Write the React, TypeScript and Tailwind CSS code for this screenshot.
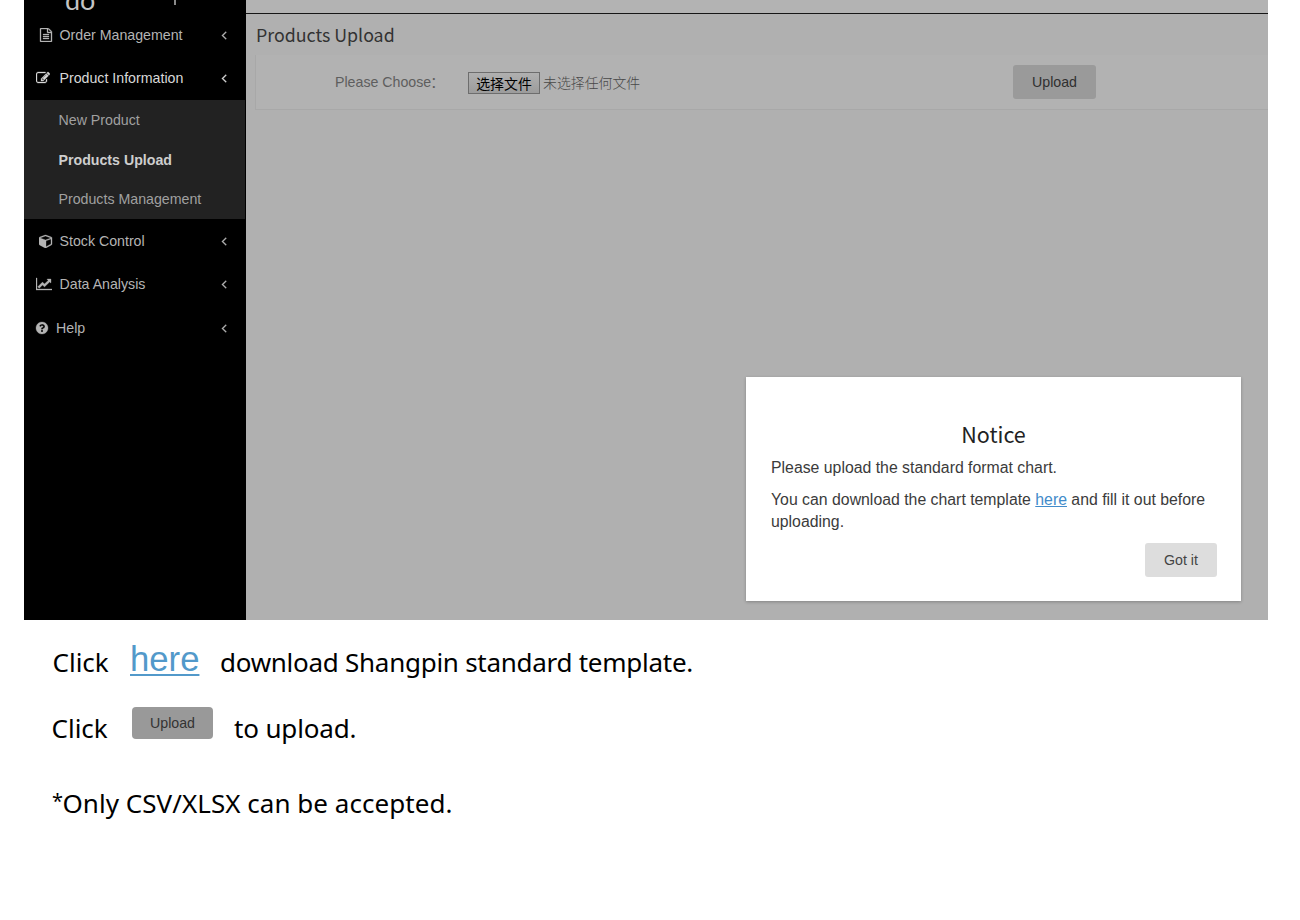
import type { ReactNode } from "react";

const icons = {
  file: "M1596 380q28 28 48 76t20 88v1152q0 40-28 68t-68 28h-1344q-40 0-68-28t-28-68v-1600q0-40 28-68t68-28h896q40 0 88 20t76 48zm-444-244v376h376q-10-29-22-41l-313-313q-12-12-41-22zm384 1528v-1024h-416q-40 0-68-28t-28-68v-416h-768v1536h1280zm-1024-864q0-14 9-23t23-9h704q14 0 23 9t9 23v64q0 14-9 23t-23 9h-704q-14 0-23-9t-9-23v-64zm736 224q14 0 23 9t9 23v64q0 14-9 23t-23 9h-704q-14 0-23-9t-9-23v-64q0-14 9-23t23-9h704zm0 256q14 0 23 9t9 23v64q0 14-9 23t-23 9h-704q-14 0-23-9t-9-23v-64q0-14 9-23t23-9h704z",
  edit: "M888 1184l116-116-152-152-116 116v56h96v96h56zm440-720q-16-16-33 1l-350 350q-17 17-1 33t33-1l350-350q17-17 1-33zm80 594v190q0 119-84.5 203.5t-203.5 84.5h-832q-119 0-203.5-84.5t-84.5-203.5v-832q0-119 84.5-203.5t203.5-84.5h832q63 0 117 25 15 7 18 23 3 17-9 29l-49 49q-14 14-32 8-23-6-45-6h-832q-66 0-113 47t-47 113v832q0 66 47 113t113 47h832q66 0 113-47t47-113v-126q0-13 9-22l64-64q15-15 35-7t20 29zm-96-738l288 288-672 672h-288v-288zm444 132l-92 92-288-288 92-92q28-28 68-28t68 28l152 152q28 28 28 68t-28 68z",
  cube: "M896 1629l640-349v-636l-640 233v752zm-64-865l698-254-698-254-698 254zm832-252v768q0 35-18 65t-49 47l-704 384q-28 16-61 16t-61-16l-704-384q-31-17-49-47t-18-65v-768q0-40 23-73t61-47l704-256q22-8 44-8t44 8l704 256q38 14 61 47t23 73z",
  chart: "M2048 1536v128h-2048v-1536h128v1408h1920zm-128-1248v435q0 21-19.5 29.5t-35.5-7.5l-121-121-633 633q-10 10-23 10t-23-10l-233-233-416 416-192-192 585-585q10-10 23-10t23 10l233 233 464-464-121-121q-16-16-7.5-35.5t29.5-19.5h435q14 0 23 9t9 23z",
  help: "M1024 1376v-192q0-14-9-23t-23-9h-192q-14 0-23 9t-9 23v192q0 14 9 23t23 9h192q14 0 23-9t9-23zm256-672q0-88-55.5-163t-138.5-116-170-41q-243 0-371 213-15 24 8 42l132 100q7 6 19 6 16 0 25-12 53-68 86-92 34-24 86-24 48 0 85.5 26t37.5 59q0 38-20 61t-68 45q-63 28-115.5 86.5t-52.5 125.5v36q0 14 9 23t23 9h192q14 0 23-9t9-23q0-19 21.5-49.5t54.5-49.5q32-18 49-28.5t46-35 44.5-48 28-60.5 12.5-81zm384 192q0 209-103 385.5t-279.5 279.5-385.5 103-385.5-103-279.5-279.5-103-385.5 103-385.5 279.5-279.5 385.5-103 385.5 103 279.5 279.5 103 385.5z",
  angle: "M1203 544q0 13-10 23l-393 393 393 393q10 10 10 23t-10 23l-50 50q-10 10-23 10t-23-10l-466-466q-10-10-10-23t10-23l466-466q10-10 23-10t23 10l50 50q10 10 10 23z",
};

function Icon({ name, className, viewBox = "0 0 1792 1792" }: { name: keyof typeof icons; className: string; viewBox?: string }) {
  return (
    <svg viewBox={viewBox} className={`block shrink-0 fill-current stroke-current stroke-[40px] ${className}`}>
      <path d={icons[name]} />
    </svg>
  );
}

function MenuRow({ icon, label, pad, className }: { icon: ReactNode; label: string; pad: string; className: string }) {
  return (
    <div className={`flex w-full items-center pr-[15px] text-[14.2px] leading-5 ${pad} ${className}`}>
      {icon}
      <span className="grow whitespace-nowrap">{label}</span>
      <Icon name="angle" className="size-[14px]" />
    </div>
  );
}

export default function App() {
  return (
    <div className="h-[920px] w-[1300px] overflow-hidden bg-white font-['Liberation_Sans',Arial,sans-serif]">
      <div className="ml-6 flex h-[620px] w-[1244px] bg-[#b0b0b0]">
        <aside className="flex w-[222px] shrink-0 flex-col bg-black text-[#b4b4b4]">
          <div className="flex h-[13px] items-start overflow-hidden pl-[41px] text-[#c4c4c4]">
            <span className="-mt-[18px] w-[109px] shrink-0 font-['Lato',sans-serif] text-[27px] leading-[36px]">do</span>
            <span className="h-[5px] w-[2px] bg-[#8a8a8a]" />
          </div>
          <MenuRow pad="pl-[15px]" className="h-[44px]" label="Order Management" icon={<Icon name="file" className="mr-[6.5px] size-[14px]" />} />
          <MenuRow pad="pl-[12px]" className="h-[43px] pb-px text-[#d8d8d8]" label="Product Information" icon={<Icon name="edit" className="mr-[9.5px] size-[14px]" />} />
          <div className="h-[119px] w-[221px] bg-[#222222] pl-[34.5px] text-[14.2px] text-[#a0a0a0]">
            <div className="h-10 leading-[40px]">New Product</div>
            <div className="h-10 font-bold leading-[40px] text-[#cecece]">Products Upload</div>
            <div className="h-[39px] leading-[39px]">Products Management</div>
          </div>
          <MenuRow pad="pl-[15px]" className="h-[44px]" label="Stock Control" icon={<Icon name="cube" className="mr-[6.5px] size-[14px]" />} />
          <MenuRow pad="pl-[12px]" className="h-[43px] pb-px" label="Data Analysis" icon={<Icon name="chart" viewBox="0 0 2048 1792" className="mr-[7.5px] h-[14px] w-4" />} />
          <MenuRow pad="pl-[11px]" className="h-[44px]" label="Help" icon={<Icon name="help" className="mr-[7px] size-[14px]" />} />
        </aside>

        <main className="flex min-w-0 grow flex-col">
          <div className="h-[14px] border-b border-[#161616] bg-[#b3b3b3]" />
          <h1 className="h-[41px] pl-[10px] font-['Noto_Sans_CJK_SC',sans-serif] text-[17.8px] leading-[40px] text-[#333333]">Products Upload</h1>
          <div className="ml-[9px] flex h-[55px] items-center border-b border-l border-[#a8a8a8] bg-[#b2b2b2] text-[14.2px]">
            <span className="w-[134px] pt-[2px] pl-[79px] whitespace-nowrap text-[#5e5e5e]">
              Please Choose<span lang="zh-CN" className="-ml-px font-['Noto_Sans_CJK_SC',sans-serif] leading-none">：</span>
            </span>
            <button className="mt-px ml-[78px] h-[22px] w-[72px] border border-[#6d6d6d] bg-linear-to-b from-[#b0b0b0] to-[#9c9c9c] font-['Noto_Sans_CJK_SC',sans-serif] text-[13.9px] leading-5 text-black">选择文件</button>
            <span className="ml-[3px] pt-px font-['Noto_Sans_CJK_SC',sans-serif] text-[13.9px] font-light text-[#484848]">未选择任何文件</span>
            <button className="mr-[172px] ml-auto h-[34px] w-[83px] rounded-[3px] bg-[#9a9a9a] pt-px text-[#303030]">Upload</button>
          </div>

          <section className="mt-[267px] ml-[500px] flex h-[224px] w-[495px] flex-col bg-white px-[25px] text-[#3b3b3b] shadow-[0_1px_3px_rgba(0,0,0,0.25)]">
            <h2 className="mt-[40px] text-center font-['Noto_Sans_CJK_SC',sans-serif] text-[21.5px] leading-[34px] text-[#222222]">Notice</h2>
            <p className="mt-[6px] text-[15.84px] leading-[22px]">Please upload the standard format chart.</p>
            <p className="mt-[10px] text-[15.84px] leading-[22px]">
              You can download the chart template <a className="text-[#428bca] underline">here</a> and fill it out before uploading.
            </p>
            <button className="-mr-px mt-[10px] h-[34px] w-[72px] self-end rounded-[3px] bg-[#dddddd] pt-px text-[14.2px] text-[#444444]">Got it</button>
          </section>
        </main>
      </div>

      <div className="pl-[52px] font-['Noto_Sans',sans-serif] text-[26px] text-black">
        <div className="mt-[22px] flex h-10 items-center whitespace-nowrap">
          <span className="w-[78px] pl-[0.5px]">Click</span>
          <a className="mb-[7px] w-[90px] font-['Liberation_Sans',Arial,sans-serif] text-[34.7px] leading-10 text-[#5299ca] underline decoration-2 underline-offset-[3px]">here</a>
          <span className="tracking-[-0.27px]">download Shangpin standard template.</span>
        </div>
        <div className="mt-[26px] flex h-10 items-center whitespace-nowrap">
          <span className="-ml-[0.5px] w-[80px]">Click</span>
          <button className="mr-[21px] mb-[10px] ml-[0.5px] h-8 w-[81px] rounded-[4px] bg-[#999999] pt-px font-['Liberation_Sans',Arial,sans-serif] text-[14.2px] text-[#333333]">Upload</button>
          <span className="tracking-[-0.15px]">to upload.</span>
        </div>
        <div className="mt-[35px] flex h-10 items-center tracking-[0.04px] whitespace-nowrap">
          <span className="w-[10.5px] pb-[5px] text-[20px]">*</span>
          <span>Only CSV/XLSX can be accepted.</span>
        </div>
      </div>
    </div>
  );
}
